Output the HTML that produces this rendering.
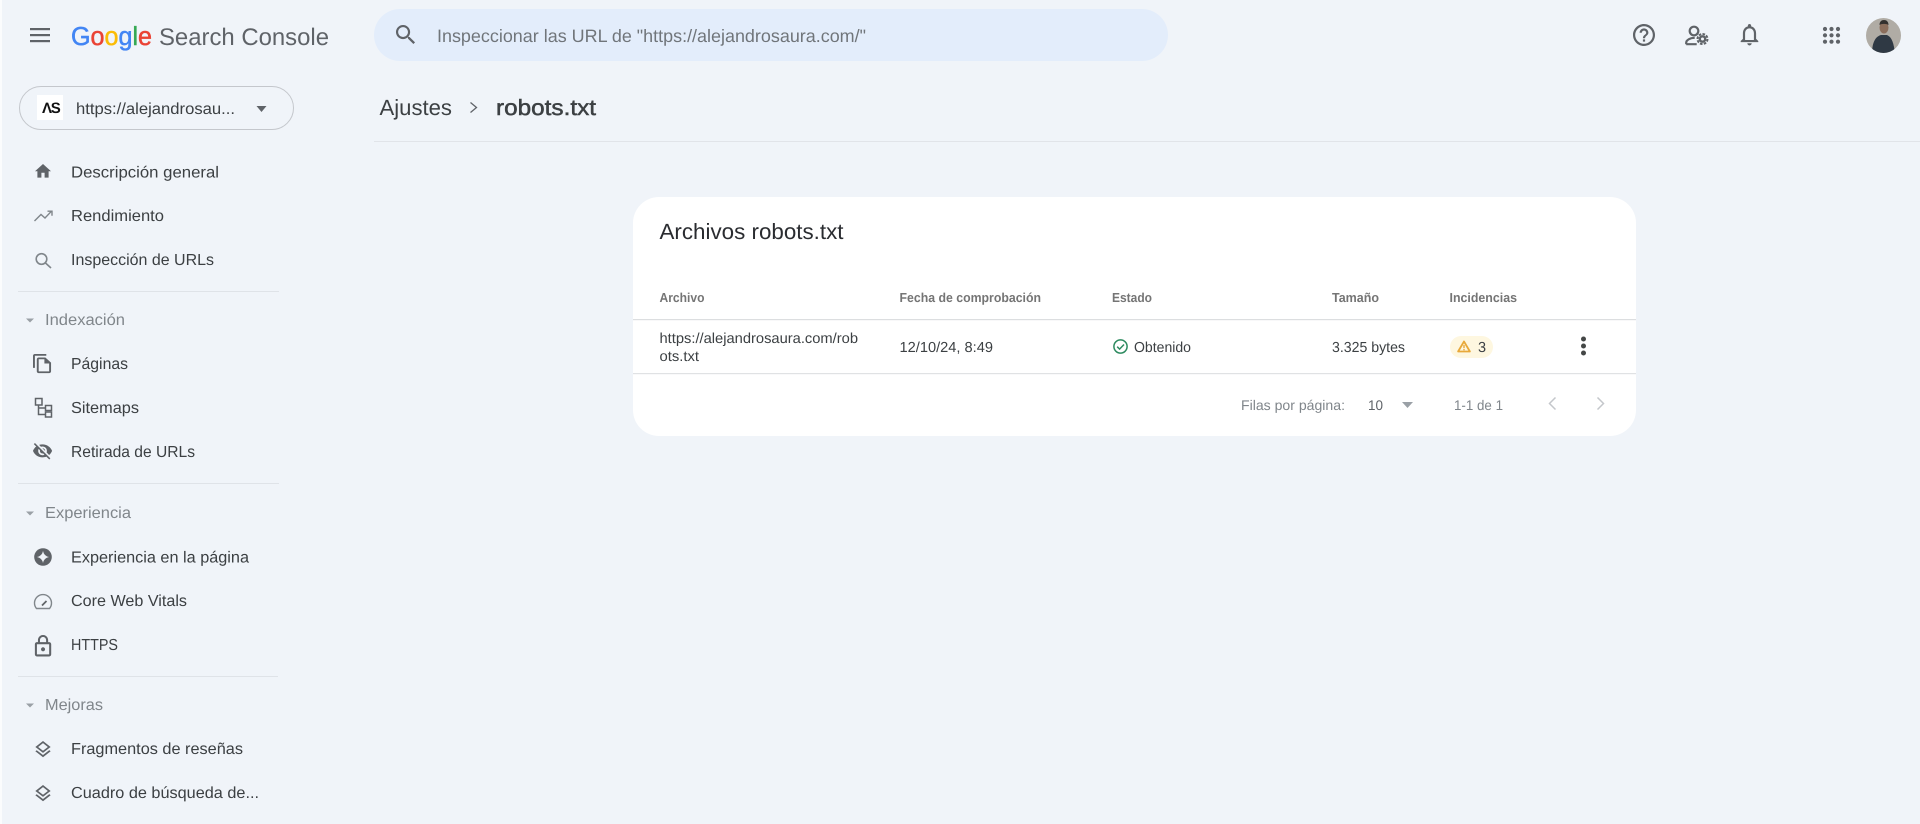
<!DOCTYPE html>
<html lang="es">
<head>
<meta charset="utf-8">
<title>robots.txt - Search Console</title>
<style>
html,body{margin:0;padding:0;background:#f0f4f9;width:1920px;height:824px;overflow:hidden}
svg{display:block;font-family:"Liberation Sans",Arial,sans-serif;filter:blur(.35px);text-rendering:geometricPrecision}
.n{font-size:16px;fill:#3c4043}
.s{font-size:16px;fill:#80868b}
.h{font-size:13px;font-weight:bold;fill:#757575}
.c{font-size:14.5px;fill:#3c4043}
.f{font-size:14px;fill:#80868b}
.i{fill:#5f6368}
</style>
</head>
<body>
<svg xmlns="http://www.w3.org/2000/svg" width="1920" height="824" viewBox="0 0 1920 824">
<rect width="1920" height="824" fill="#f0f4f9"/>
<rect width="2" height="824" fill="#fbfcfd"/>

<!-- Header -->
<g class="i"><rect x="30" y="28" width="20" height="2.2"/><rect x="30" y="34" width="20" height="2.2"/><rect x="30" y="40" width="20" height="2.2"/></g>
<text x="71" y="45" font-size="26" stroke-width=".5" textLength="81" lengthAdjust="spacingAndGlyphs"><tspan fill="#4285f4" stroke="#4285f4">G</tspan><tspan fill="#ea4335" stroke="#ea4335">o</tspan><tspan fill="#fbbc05" stroke="#fbbc05">o</tspan><tspan fill="#4285f4" stroke="#4285f4">g</tspan><tspan fill="#34a853" stroke="#34a853">l</tspan><tspan fill="#ea4335" stroke="#ea4335">e</tspan></text>
<text x="159" y="45" font-size="24" fill="#5f6368" textLength="170" lengthAdjust="spacingAndGlyphs">Search Console</text>

<rect x="374" y="9" width="794" height="52" rx="26" fill="#e3edfb"/>
<path class="i" transform="translate(392.7 21.7) scale(1.09)" d="M15.5 14h-.79l-.28-.27C15.41 12.59 16 11.11 16 9.5 16 5.91 13.09 3 9.5 3S3 5.91 3 9.5 5.91 16 9.5 16c1.61 0 3.09-.59 4.23-1.57l.27.28v.79l5 4.99L20.49 19l-4.99-5zm-6 0C7.01 14 5 11.99 5 9.5S7.01 5 9.5 5 14 7.01 14 9.5 11.99 14 9.5 14z"/>
<text x="437" y="42" font-size="18" fill="#70757a" textLength="429" lengthAdjust="spacingAndGlyphs">Inspeccionar las URL de "https://alejandrosaura.com/"</text>

<path class="i" transform="translate(1630.8 21.8) scale(1.1)" d="M11 18h2v-2h-2v2zm1-16C6.48 2 2 6.48 2 12s4.48 10 10 10 10-4.48 10-10S17.52 2 12 2zm0 18c-4.41 0-8-3.59-8-8s3.59-8 8-8 8 3.59 8 8-3.59 8-8 8zm0-14c-2.21 0-4 1.79-4 4h2c0-1.1.9-2 2-2s2 .9 2 2c0 2-3 1.75-3 5h2c0-2.25 3-2.5 3-5 0-2.21-1.79-4-4-4z"/>
<g fill="none" stroke="#5f6368" stroke-width="2.2">
<circle cx="1694" cy="31" r="4.3"/>
<path d="M1686.2 44.2h10.5M1686.2 44.2v-1.4c0-3 4.4-5 8.5-5"/>
<circle cx="1702.5" cy="39" r="2.7" stroke-width="2.4"/>
<circle cx="1702.5" cy="39" r="5" stroke-width="2" stroke-dasharray="2.6 1.3"/>
</g>
<path class="i" transform="translate(1736.3 21.25) scale(1.1)" d="M12 22c1.1 0 2-.9 2-2h-4c0 1.1.9 2 2 2zm6-6v-5c0-3.07-1.63-5.64-4.5-6.32V4c0-.83-.67-1.5-1.5-1.5s-1.5.67-1.5 1.5v.68C7.64 5.36 6 7.92 6 11v5l-2 2v1h16v-1l-2-2zm-2 1H8v-6c0-2.48 1.51-4.5 4-4.5s4 2.02 4 4.5v6z"/>
<g class="i">
<circle cx="1825" cy="29" r="2.1"/><circle cx="1831.5" cy="29" r="2.1"/><circle cx="1838" cy="29" r="2.1"/>
<circle cx="1825" cy="35.3" r="2.1"/><circle cx="1831.5" cy="35.3" r="2.1"/><circle cx="1838" cy="35.3" r="2.1"/>
<circle cx="1825" cy="41.7" r="2.1"/><circle cx="1831.5" cy="41.7" r="2.1"/><circle cx="1838" cy="41.7" r="2.1"/>
</g>
<clipPath id="av"><circle cx="1883.5" cy="35.5" r="17.5"/></clipPath>
<g clip-path="url(#av)">
<rect x="1866" y="18" width="36" height="36" fill="#b0aca5"/>
<path d="M1872 54c0-9 2-17 9-19h6c5 2 7 9 8 19z" fill="#2f3944"/>
<ellipse cx="1884" cy="27.5" rx="4.5" ry="6" fill="#8b6e5c"/>
<path d="M1879.5 25c0-3.5 2-5 4.5-5s4.5 1.5 4.5 5c-2-1.5-7-1.5-9 0z" fill="#33302e"/>
</g>

<!-- Property selector -->
<rect x="19.5" y="86.5" width="274" height="43" rx="21.5" fill="none" stroke="#c4c7cc"/>
<rect x="37" y="95" width="26" height="25" fill="#fff"/>
<text x="42" y="113" font-size="15" font-weight="bold" fill="#111" letter-spacing="-1.2">ΛS</text>
<text x="76" y="114" class="n" textLength="159" lengthAdjust="spacingAndGlyphs">https://alejandrosau...</text>
<path class="i" d="M256.5 106h10l-5 6z"/>

<!-- Sidebar -->
<path class="i" transform="translate(33.4 161.6) scale(.8)" d="M10 20v-6h4v6h5v-8h3L12 3 2 12h3v8z"/>
<text x="71" y="177.5" class="n" textLength="148" lengthAdjust="spacingAndGlyphs">Descripción general</text>
<path d="M34.5 221l6.5-6.5 4 3.5 6-6.3M47.5 211.2h4.5v4.5" fill="none" stroke="#80868b" stroke-width="1.4"/>
<text x="71" y="221" class="n" textLength="93" lengthAdjust="spacingAndGlyphs">Rendimiento</text>
<g fill="none" stroke="#80868b" stroke-width="1.6"><circle cx="41.5" cy="259" r="5.3"/><path d="M45.5 263l5.5 5"/></g>
<text x="71" y="265" class="n" textLength="143" lengthAdjust="spacingAndGlyphs">Inspección de URLs</text>
<rect x="18" y="291" width="261" height="1" fill="#dfe3e8"/>

<path fill="#9aa0a6" d="M26 318.5h8l-4 4z"/>
<text x="45" y="325" class="s" textLength="80" lengthAdjust="spacingAndGlyphs">Indexación</text>
<path class="i" transform="translate(31.1 353.1) scale(.95 .87)" d="M16 1H4c-1.1 0-2 .9-2 2v14h2V3h12V1zm-1 4H8c-1.1 0-1.99.9-1.99 2L6 21c0 1.1.89 2 1.99 2H19c1.1 0 2-.9 2-2V11l-6-6zM8 21V7h6v5h5v9H8z"/>
<text x="71" y="369" class="n" textLength="57" lengthAdjust="spacingAndGlyphs">Páginas</text>
<g fill="none" stroke="#5f6368" stroke-width="1.5">
<rect x="35.5" y="398.5" width="6.5" height="6.5"/>
<rect x="45.5" y="405.5" width="6" height="5"/>
<rect x="45.5" y="412" width="6" height="5"/>
<path d="M38.5 405v9.5h7M38.5 408h7"/>
</g>
<text x="71" y="413" class="n" textLength="68" lengthAdjust="spacingAndGlyphs">Sitemaps</text>
<path class="i" transform="translate(32.1 440.4) scale(.87)" d="M12 7c2.76 0 5 2.24 5 5 0 .65-.13 1.26-.36 1.83l2.92 2.92c1.51-1.26 2.7-2.89 3.43-4.75-1.73-4.39-6-7.5-11-7.5-1.4 0-2.74.25-3.98.7l2.16 2.16C10.74 7.13 11.35 7 12 7zM2 4.27l2.28 2.28.46.46C3.08 8.3 1.78 10.02 1 12c1.73 4.39 6 7.5 11 7.5 1.55 0 3.03-.3 4.38-.84l.42.42L19.73 22 21 20.73 3.27 3 2 4.27zM7.53 9.8l1.55 1.55c-.05.21-.08.43-.08.65 0 1.66 1.34 3 3 3 .22 0 .44-.03.65-.08l1.55 1.55c-.67.33-1.41.53-2.2.53-2.76 0-5-2.24-5-5 0-.79.2-1.53.53-2.2zm4.31-.78l3.15 3.15.02-.16c0-1.66-1.34-3-3-3l-.17.01z"/>
<text x="71" y="457" class="n" textLength="124" lengthAdjust="spacingAndGlyphs">Retirada de URLs</text>
<rect x="18" y="483" width="261" height="1" fill="#dfe3e8"/>

<path fill="#9aa0a6" d="M26 511.5h8l-4 4z"/>
<text x="45" y="518" class="s" textLength="86" lengthAdjust="spacingAndGlyphs">Experiencia</text>
<circle cx="43" cy="557" r="8.8" fill="#5f6368"/>
<path fill="#f0f4f9" d="M43 551Q44 556 49 557 44 558 43 563 42 558 37 557 42 556 43 551z"/>
<text x="71" y="562.5" class="n" textLength="178" lengthAdjust="spacingAndGlyphs">Experiencia en la página</text>
<path d="M36.5 608.5A8.5 8.5 0 1 1 49.5 608.5z" fill="none" stroke="#80868b" stroke-width="1.4"/>
<path d="M42 605.5l4.5-4.5" stroke="#5f6368" stroke-width="1.8"/>
<text x="71" y="606" class="n" textLength="116" lengthAdjust="spacingAndGlyphs">Core Web Vitals</text>
<path class="i" transform="translate(30.8 634) scale(1.02)" d="M18 8h-1V6c0-2.76-2.24-5-5-5S7 3.24 7 6v2H6c-1.1 0-2 .9-2 2v10c0 1.1.9 2 2 2h12c1.1 0 2-.9 2-2V10c0-1.1-.9-2-2-2zM9 6c0-1.66 1.34-3 3-3s3 1.34 3 3v2H9V6zm9 14H6V10h12v10zm-6-3c1.1 0 2-.9 2-2s-.9-2-2-2-2 .9-2 2 .9 2 2 2z"/>
<text x="71" y="650" class="n" textLength="47" lengthAdjust="spacingAndGlyphs">HTTPS</text>
<rect x="18" y="676" width="260" height="1" fill="#dfe3e8"/>

<path fill="#9aa0a6" d="M26 703.5h8l-4 4z"/>
<text x="45" y="710" class="s" textLength="58" lengthAdjust="spacingAndGlyphs">Mejoras</text>
<path class="i" transform="translate(32.8 739.3) scale(.85)" d="M11.99 18.54l-7.37-5.73L3 14.07l9 7 9-7-1.63-1.27-7.38 5.74zM12 16l7.36-5.73L21 9l-9-7-9 7 1.63 1.27L12 16zm0-11.47L17.74 9 12 13.47 6.26 9 12 4.53z"/>
<text x="71" y="754" class="n" textLength="172" lengthAdjust="spacingAndGlyphs">Fragmentos de reseñas</text>
<path class="i" transform="translate(32.8 783.3) scale(.85)" d="M11.99 18.54l-7.37-5.73L3 14.07l9 7 9-7-1.63-1.27-7.38 5.74zM12 16l7.36-5.73L21 9l-9-7-9 7 1.63 1.27L12 16zm0-11.47L17.74 9 12 13.47 6.26 9 12 4.53z"/>
<text x="71" y="798" class="n" textLength="188" lengthAdjust="spacingAndGlyphs">Cuadro de búsqueda de...</text>

<!-- Breadcrumb -->
<text x="379.5" y="115" font-size="22" fill="#3c4043" textLength="72.5" lengthAdjust="spacingAndGlyphs">Ajustes</text>
<path d="M470.5 102.5l6 5-6 5" fill="none" stroke="#5f6368" stroke-width="1.3"/>
<text x="496" y="115" font-size="22" fill="#3c4043" stroke="#3c4043" stroke-width=".5" textLength="100" lengthAdjust="spacingAndGlyphs">robots.txt</text>
<rect x="374" y="141" width="1546" height="1" fill="#e1e4e9"/>

<!-- Card -->
<rect x="633" y="197" width="1003" height="239" rx="26" fill="#fff"/>
<text x="659.5" y="239" font-size="22" fill="#2a2c30" textLength="184" lengthAdjust="spacingAndGlyphs">Archivos robots.txt</text>
<text x="659.5" y="302" class="h" textLength="45" lengthAdjust="spacingAndGlyphs">Archivo</text>
<text x="899.5" y="302" class="h" textLength="141.5" lengthAdjust="spacingAndGlyphs">Fecha de comprobación</text>
<text x="1112" y="302" class="h" textLength="40" lengthAdjust="spacingAndGlyphs">Estado</text>
<text x="1332" y="302" class="h" textLength="47" lengthAdjust="spacingAndGlyphs">Tamaño</text>
<text x="1449.5" y="302" class="h" textLength="67.5" lengthAdjust="spacingAndGlyphs">Incidencias</text>
<rect x="633" y="319" width="1003" height="1.2" fill="#dcdee0"/>
<rect x="633" y="373" width="1003" height="1.2" fill="#e0e2e4"/>

<text x="659.5" y="343" class="c" textLength="198.5" lengthAdjust="spacingAndGlyphs">https://alejandrosaura.com/rob</text>
<text x="659.5" y="361" class="c" textLength="39.5" lengthAdjust="spacingAndGlyphs">ots.txt</text>
<text x="899.5" y="352" class="c" textLength="93.5" lengthAdjust="spacingAndGlyphs">12/10/24, 8:49</text>
<circle cx="1120.5" cy="346.5" r="6.6" fill="none" stroke="#2e8b60" stroke-width="1.5"/>
<path d="M1117.2 346.7l2.4 2.4 4.4-4.6" fill="none" stroke="#2e8b60" stroke-width="1.5"/>
<text x="1134" y="352" class="c" textLength="57" lengthAdjust="spacingAndGlyphs">Obtenido</text>
<text x="1332" y="352" class="c" textLength="73" lengthAdjust="spacingAndGlyphs">3.325 bytes</text>
<rect x="1450" y="336" width="43" height="22" rx="11" fill="#fef7e0"/>
<path d="M1464 341.5l5.9 10h-11.8z" fill="none" stroke="#e8a93a" stroke-width="1.8" stroke-linejoin="round"/>
<rect x="1463.3" y="345" width="1.4" height="3.2" fill="#e8a93a"/><rect x="1463.3" y="349" width="1.4" height="1.3" fill="#e8a93a"/>
<text x="1478" y="352" class="c">3</text>
<g fill="#444746"><circle cx="1583.5" cy="339" r="2.5"/><circle cx="1583.5" cy="346" r="2.5"/><circle cx="1583.5" cy="353" r="2.5"/></g>

<text x="1241" y="410" class="f" textLength="104" lengthAdjust="spacingAndGlyphs">Filas por página:</text>
<text x="1368" y="410" font-size="14" fill="#5f6368" textLength="15" lengthAdjust="spacingAndGlyphs">10</text>
<path fill="#9aa0a6" d="M1402 402h11l-5.5 6z"/>
<text x="1454" y="410" class="f" textLength="49" lengthAdjust="spacingAndGlyphs">1-1 de 1</text>
<path d="M1555.5 397.5l-6 6 6 6" fill="none" stroke="#c4c7cb" stroke-width="1.5"/>
<path d="M1597.5 397.5l6 6-6 6" fill="none" stroke="#c4c7cb" stroke-width="1.5"/>
</svg>
</body>
</html>
